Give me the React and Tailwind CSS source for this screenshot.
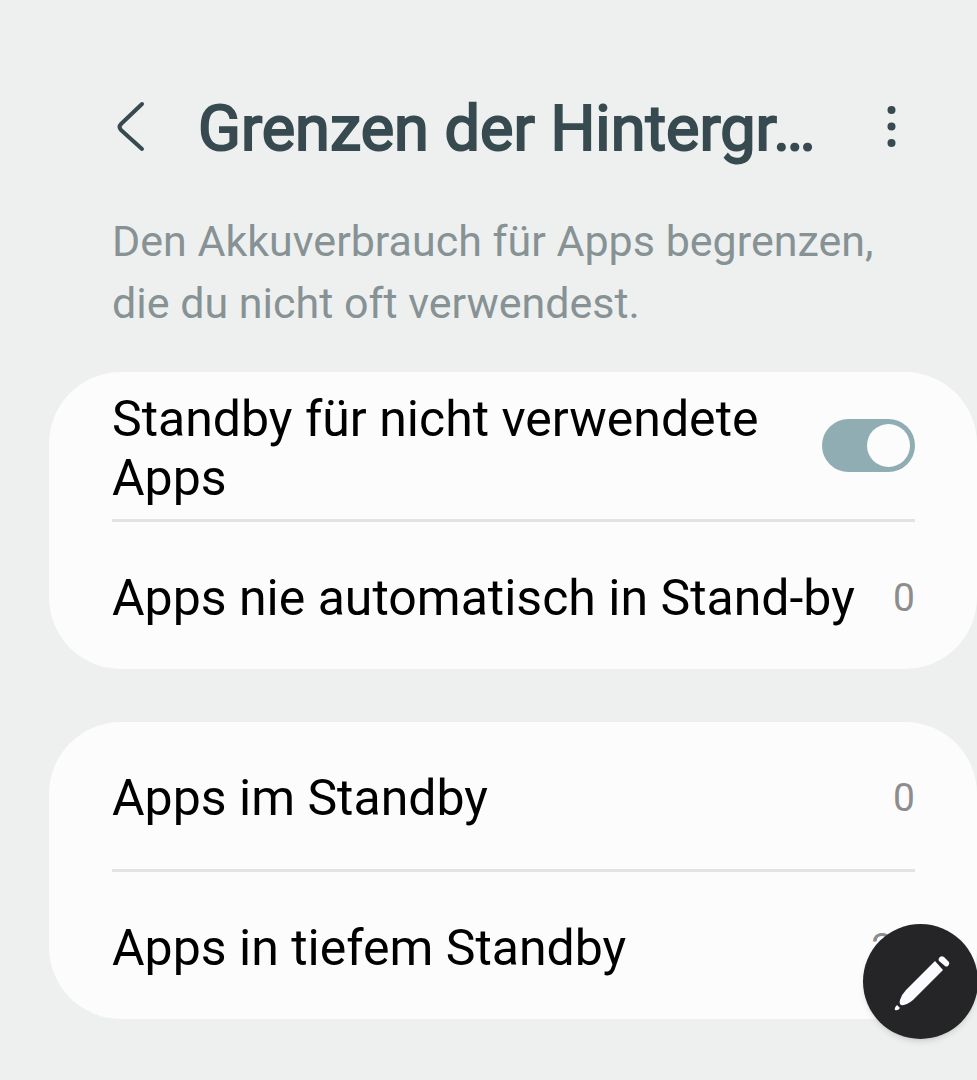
import React from 'react'

const Row = ({label, count}) => {
  return (
    <a href="#" className="flex items-center justify-between min-h-[147px] pt-1.5">
      <span>{label}</span>
      <span className="text-[39px] text-[#8d8d8f]">{count}</span>
    </a>
  )
}

const Card = ({children}) => {
  return (
    <section className="bg-[#fcfcfc] rounded-[72px] pl-[63px] pr-[62px] text-[50px] leading-[59px] text-black">
      {children}
    </section>
  )
}

const Divider = () => <hr className="border-t-[3px] border-[#e3e3e3]" />

const App = () => {
  return (
    <div className="relative min-h-screen bg-[#eef0f0] pl-[49px] font-[Roboto,sans-serif]">
      <header className="flex items-center h-[254px] pl-[63px] pr-[62px]">
        <button aria-label="Zurück" className="w-10 shrink-0 text-[#374a50]">
          <svg width="40" height="56" viewBox="0 0 40 56" fill="none" stroke="currentColor" strokeWidth="4" strokeLinecap="round" strokeLinejoin="round">
            <path d="M30 5 L9 25 Q6 28 9 31 L30 50" />
          </svg>
        </button>
        <h1 className="grow pl-[46px] pt-1 text-[63px] font-normal whitespace-nowrap text-[#374a50] [-webkit-text-stroke:2px_#374a50]">Grenzen der Hintergr…</h1>
        <button aria-label="Weitere Optionen" className="w-12 shrink-0 text-[#374a50]">
          <svg width="48" height="48" viewBox="0 0 48 48" fill="currentColor">
            <circle cx="24.5" cy="7" r="4" />
            <circle cx="24.5" cy="23.5" r="4" />
            <circle cx="24.5" cy="40" r="4" />
          </svg>
        </button>
      </header>

      <p className="-mt-11 pl-[63px] pr-[62px] text-[43px] leading-[62px] text-[#879295]">
        Den Akkuverbrauch für Apps begrenzen, die du nicht oft verwendest.
      </p>

      <main className="mt-[38px] flex flex-col gap-[53px]">
        <Card>
          <div className="flex items-center justify-between min-h-[147px]">
            <label htmlFor="standby" className="max-w-[680px] pt-1.5">Standby für nicht verwendete Apps</label>
            <input
              id="standby"
              type="checkbox"
              role="switch"
              defaultChecked
              className="appearance-none shrink-0 flex items-center w-[93px] h-[53px] px-[5px] rounded-full bg-[#b5b9ba] checked:bg-[#91adb4] checked:justify-end before:size-[43px] before:rounded-full before:bg-[#fcfcfc]"
            />
          </div>
          <Divider />
          <Row label="Apps nie automatisch in Stand-by" count="0" />
        </Card>
        <Card>
          <Row label="Apps im Standby" count="0" />
          <Divider />
          <Row label="Apps in tiefem Standby" count="20" />
        </Card>
      </main>

      <button aria-label="Bearbeiten" className="fixed -right-px bottom-[41px] size-[115px] rounded-full bg-[#252527] shadow-md">
        <svg className="size-full" viewBox="0 0 115 115" fill="#fbfaff">
          <path d="M72 37 L80 46 L50 76 Q43 82 38 81 Q36 80 37 76 Q39 70 43 66 Z" />
          <path d="M76 34 Q78 31 81 33 L86 38 Q87 40 85 42 Q83 43 82 42 L76 37 Q75 36 76 34 Z" />
          <path d="M34 81 L37 84 Q35 87 32 86 Q31 84 34 81 Z" />
        </svg>
      </button>
    </div>
  )
}

export default App
